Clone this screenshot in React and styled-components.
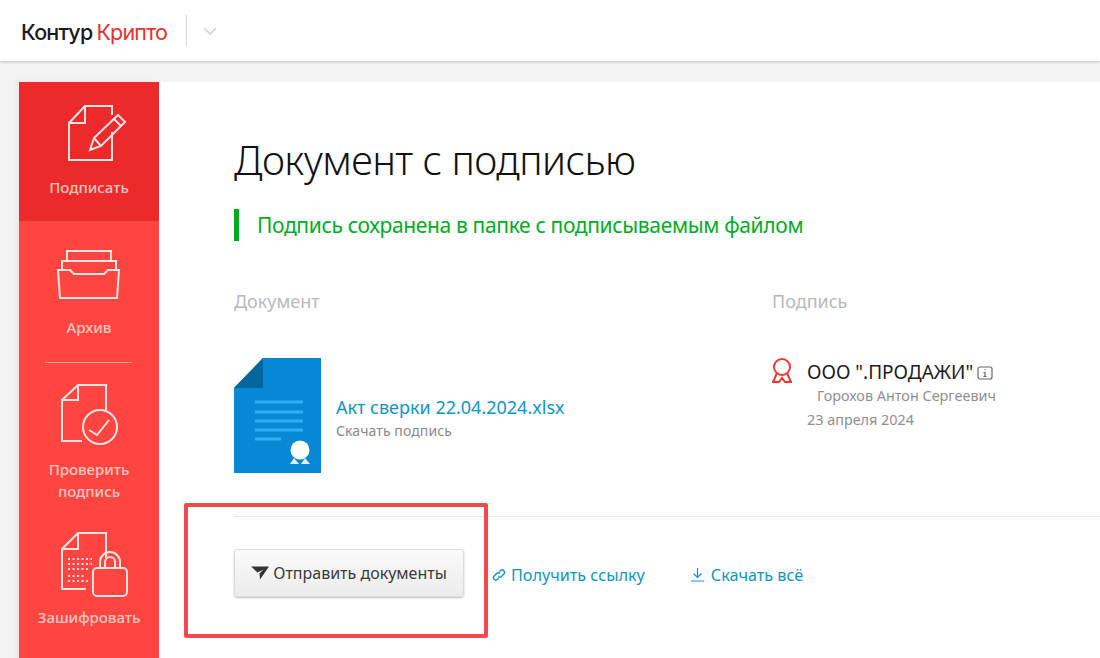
import React from 'react';
import styled, { createGlobalStyle } from 'styled-components';

const GlobalStyle = createGlobalStyle`
  html, body {
    margin: 0;
    padding: 0;
    height: 658px;
    overflow: hidden;
    background: #f3f3f3;
    font-family: "Noto Sans", "Open Sans", sans-serif;
  }
  * { box-sizing: border-box; }
`;

const Page = styled.div`
  position: relative;
  width: 1100px;
  height: 658px;
  overflow: hidden;
`;

const Header = styled.header`
  display: flex;
  align-items: center;
  height: 61px;
  padding-left: 21px;
  background: #fff;
  box-shadow: 0 1px 3px rgba(0, 0, 0, 0.2);
`;

const Logo = styled.div`
  display: flex;
  gap: 4px;
  width: 148px;
  padding-top: 2px;
  font-family: "Inter", sans-serif;
  font-size: 21.5px;
  letter-spacing: -0.8px;
  color: #e8302e;
`;

const LogoDark = styled.span`
  font-weight: 500;
  color: #1a1a1a;
`;

const HeaderDivider = styled.div`
  width: 1px;
  height: 32px;
  margin: 0 16px 0 17px;
  background: #d8d8d8;
`;

const Body = styled.div`
  display: flex;
  height: 597px;
  margin-top: 21px;
  padding-left: 19px;
`;

const Sidebar = styled.nav`
  flex: none;
  width: 140px;
  background: #ff4541;
  box-shadow: -2px 0 6px rgba(0, 0, 0, 0.06);
`;

const NavItem = styled.div`
  display: flex;
  flex-direction: column;
  align-items: center;
  height: ${(p) => p.$height}px;
  padding-top: ${(p) => p.$top}px;
  background: ${(p) => (p.$active ? '#ec2a2b' : 'transparent')};
`;

const NavIcon = styled.svg`
  flex: none;
  width: 70px;
  height: 60px;
  margin-bottom: ${(p) => p.$gap}px;
  overflow: visible;
  fill: none;
  stroke: #ffe4df;
  stroke-width: 2;
`;

const NavLabel = styled.div`
  font-size: 15px;
  font-weight: 500;
  line-height: 21.5px;
  text-align: center;
  color: #ffc5bf;
`;

const NavDivider = styled.div`
  width: 87px;
  height: 1px;
  margin-left: 26px;
  background: #ff9d97;
`;

const Main = styled.main`
  flex: 1;
  padding: 52px 0 0 75px;
  background: #fff;
`;

const Title = styled.h1`
  margin: 0;
  font-size: 40px;
  font-weight: 300;
  line-height: 52px;
  letter-spacing: -0.55px;
  color: #111;
`;

const Notice = styled.div`
  display: flex;
  align-items: center;
  height: 32px;
  margin-top: 23px;
  padding-left: 18px;
  border-left: 5px solid #00ad1f;
  font-size: 21px;
  letter-spacing: -0.35px;
  color: #00ad1f;
`;

const Columns = styled.div`
  display: grid;
  grid-template-columns: 538px 1fr;
  margin-top: 47px;
`;

const ColumnTitle = styled.div`
  font-size: 18px;
  line-height: 26px;
  color: #b9b9b9;
`;

const FileRow = styled.div`
  display: flex;
  align-items: center;
  gap: 15px;
  margin-top: 44px;
`;

const FileIcon = styled.svg`
  flex: none;
  width: 87px;
  height: 115px;
`;

const FileText = styled.div`
  padding-top: 6px;
`;

const FileName = styled.div`
  font-size: 18px;
  line-height: 24px;
  color: #0a97c8;
`;

const FileHint = styled.div`
  font-size: 14px;
  line-height: 24px;
  letter-spacing: 0.1px;
  color: #8a8a8a;
`;

const SignerRow = styled.div`
  display: flex;
  gap: 15px;
  margin-top: 44px;
`;

const SignerBadge = styled.svg`
  flex: none;
  width: 20px;
  height: 25px;
  fill: none;
  stroke: #f2352f;
  stroke-width: 2;
`;

const SignerInfo = styled.div`
  padding-top: 2px;
`;

const SignerOrg = styled.div`
  display: flex;
  align-items: center;
  gap: 4px;
  font-size: 19px;
  line-height: 24px;
  color: #1c1c1c;
`;

const InfoIcon = styled.svg`
  width: 16px;
  height: 16px;
  margin-top: 1px;
`;

const SignerMeta = styled.div`
  padding-left: ${(p) => p.$indent || 0}px;
  font-size: 14.4px;
  line-height: 24px;
  color: #8f8f8f;
`;

const Divider = styled.div`
  height: 1px;
  margin-top: 43px;
  background: #e8e8e8;
`;

const Actions = styled.div`
  display: flex;
  align-items: center;
  margin-top: 32px;
`;

const SendButton = styled.button`
  display: flex;
  align-items: center;
  justify-content: center;
  gap: 4px;
  width: 230px;
  height: 48px;
  padding: 0;
  border: 1px solid #dcdcdc;
  border-radius: 3px;
  background: linear-gradient(#fafafa, #ececec);
  box-shadow: 0 1px 2px rgba(0, 0, 0, 0.25);
  font-family: inherit;
  font-size: 16px;
  color: #3a3a3a;
`;

const ActionLink = styled.a`
  display: flex;
  align-items: center;
  gap: ${(p) => p.$gap}px;
  margin-left: ${(p) => p.$left}px;
  padding-top: 3px;
  font-size: 16.2px;
  color: #0a97c8;
`;

// красная рамка-аннотация поверх скриншота
const Callout = styled.div`
  position: absolute;
  left: 184px;
  top: 503px;
  width: 304px;
  height: 135px;
  border: 4px solid #f4484a;
  border-radius: 2px;
  pointer-events: none;
`;

const App = () => (
  <Page>
    <GlobalStyle />
    <Header>
      <Logo>
        <LogoDark>Контур</LogoDark>
        <span>Крипто</span>
      </Logo>
      <HeaderDivider />
      <svg width="14" height="8" viewBox="0 0 14 8" fill="none" stroke="#cfcfcf" strokeWidth="1.5">
        <path d="M1 1l6 6 6-6" />
      </svg>
    </Header>
    <Body>
      <Sidebar>
        <NavItem $active $height={139} $top={21}>
          <NavIcon $gap={14} viewBox="0 0 70 60">
            <path d="M58 12V3H31L15 20V57H58V29M31 3V20H15" />
            <path d="M36 47l4-12 24-23 7 7-24 24zM40 35l7 8M60 16l7 7" />
          </NavIcon>
          <NavLabel>Подписать</NavLabel>
        </NavItem>
        <NavItem $height={141} $top={24}>
          <NavIcon $gap={12} viewBox="0 0 70 60">
            <path d="M13 16V6H57V16M8 25V16H62V25" />
            <path d="M4 25H16L20 29H50L54 25H65L63 53H6Z" />
          </NavIcon>
          <NavLabel>Архив</NavLabel>
        </NavItem>
        <NavDivider />
        <NavItem $height={148} $top={21}>
          <NavIcon $gap={15} viewBox="0 0 70 60">
            <path d="M52 26V1H24L8 16V57H28M24 1V16H8" />
            <circle cx="46" cy="43" r="17" />
            <path d="M35 46l8 5 12-15" />
          </NavIcon>
          <NavLabel>Проверить<br />подпись</NavLabel>
        </NavItem>
        <NavItem $height={120} $top={24}>
          <NavIcon $gap={12} viewBox="0 0 70 60">
            <path d="M52 23V-2H24L8 14V54H32M24 -2V14H8" />
            <path d="M14 24h24M14 29h24M14 34h20M14 41h16M14 46h20" strokeDasharray="2 2.5" />
            <rect x="39" y="33" width="34" height="28" rx="4" />
            <path d="M46 33V27a10 10 0 0 1 20 0V33M51 33V27a5 5 0 0 1 10 0V33" />
          </NavIcon>
          <NavLabel>Зашифровать</NavLabel>
        </NavItem>
      </Sidebar>
      <Main>
        <Title>Документ с подписью</Title>
        <Notice>Подпись сохранена в папке с подписываемым файлом</Notice>
        <Columns>
          <div>
            <ColumnTitle>Документ</ColumnTitle>
            <FileRow>
              <FileIcon viewBox="0 0 87 115">
                <path d="M29 0H87V115H0V30Z" fill="#0688d5" />
                <path d="M29 0V30H0Z" fill="#05669f" />
                <path d="M21 44H69M21 54H69M21 63H69M21 72H69M21 81H47" stroke="#2cb0f0" strokeWidth="3" />
                <circle cx="66" cy="92" r="9.5" fill="#fff" />
                <path d="M56 106l4-6 5 6zM67 106l4-6 5 6z" fill="#e2f2fb" />
              </FileIcon>
              <FileText>
                <FileName>Акт сверки 22.04.2024.xlsx</FileName>
                <FileHint>Скачать подпись</FileHint>
              </FileText>
            </FileRow>
          </div>
          <div>
            <ColumnTitle>Подпись</ColumnTitle>
            <SignerRow>
              <SignerBadge viewBox="0 0 20 25">
                <circle cx="10" cy="9" r="8" />
                <path d="M5 15L1 24H7L10 20L13 24H19L15 15" />
              </SignerBadge>
              <SignerInfo>
                <SignerOrg>
                  ООО ".ПРОДАЖИ"
                  <InfoIcon viewBox="0 0 16 16" fill="none" stroke="#666" strokeWidth="1.2">
                    <rect x="1" y="2" width="14" height="12" rx="2" />
                    <path d="M6.5 7.5H8V11.5M6.5 11.5H9.5M7.5 4.6H8.5" />
                  </InfoIcon>
                </SignerOrg>
                <SignerMeta $indent={10}>Горохов Антон Сергеевич</SignerMeta>
                <SignerMeta>23 апреля 2024</SignerMeta>
              </SignerInfo>
            </SignerRow>
          </div>
        </Columns>
        <Divider />
        <Actions>
          <SendButton>
            <svg width="18" height="14" viewBox="0 0 18 14" fill="#333">
              <path d="M0 .5H18L9 13.5 8.5 7.5 12.5 3.5 6.5 6.5Z" />
            </svg>
            Отправить документы
          </SendButton>
          <ActionLink $left={28} $gap={5}>
            <svg width="14" height="14" viewBox="0 0 14 14" fill="none" stroke="#0a97c8" strokeWidth="1.4">
              <path d="M6 8.5a2.4 2.4 0 0 0 3.4 0l2.4-2.4a2.4 2.4 0 0 0-3.4-3.4L7.4 3.7" />
              <path d="M8 5.5a2.4 2.4 0 0 0-3.4 0L2.2 7.9a2.4 2.4 0 0 0 3.4 3.4l1-1" />
            </svg>
            Получить ссылку
          </ActionLink>
          <ActionLink $left={45} $gap={6}>
            <svg width="15" height="15" viewBox="0 0 15 15" fill="none" stroke="#0a97c8" strokeWidth="1.2">
              <path d="M7.5 1V10M3.5 6.5L7.5 10.5L11.5 6.5M1 14H14" />
            </svg>
            Скачать всё
          </ActionLink>
        </Actions>
      </Main>
    </Body>
    <Callout />
  </Page>
);

export default App;
